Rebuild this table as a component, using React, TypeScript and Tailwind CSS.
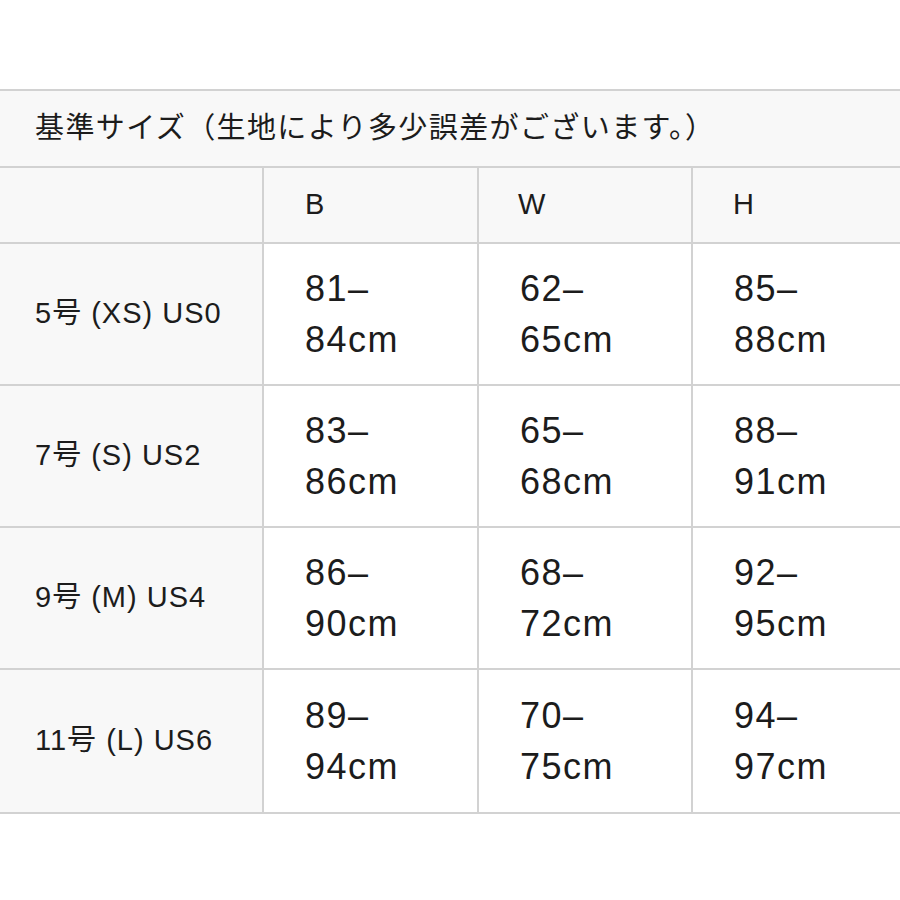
const font = { fontFamily: '"Liberation Sans", "Noto Sans CJK JP", sans-serif' };

const rows: [string, string[], string[], string[]][] = [
  ['5号 (XS) US0', ['81–', '84cm'], ['62–', '65cm'], ['85–', '88cm']],
  ['7号 (S) US2', ['83–', '86cm'], ['65–', '68cm'], ['88–', '91cm']],
  ['9号 (M) US4', ['86–', '90cm'], ['68–', '72cm'], ['92–', '95cm']],
  ['11号 (L) US6', ['89–', '94cm'], ['70–', '75cm'], ['94–', '97cm']],
];

function Range({ lines, last }: { lines: string[]; last?: boolean }) {
  return (
    <div
      className={`flex flex-col justify-center bg-white pl-[41px] text-[36px] leading-[51px] tracking-[1.5px] text-[#1c1c1c] ${
        last ? '' : 'border-r-2 border-[#d2d2d2]'
      }`}
    >
      <span>{lines[0]}</span>
      <span>{lines[1]}</span>
    </div>
  );
}

export default function App() {
  return (
    <div className="min-h-[900px] w-[900px] bg-white pt-[89px]" style={font}>
      <div className="border-y-2 border-[#d2d2d2]">
        <div className="flex h-[77px] items-center border-b-2 border-[#d2d2d2] bg-[#f8f8f8] pl-[35px] text-[29px] tracking-[1.4px] text-[#1c1c1c]">
          基準サイズ（生地により多少誤差がございます。）
        </div>
        <div className="grid h-[76px] grid-cols-[264px_215px_214px_1fr] border-b-2 border-[#d2d2d2] bg-[#f8f8f8] text-[29px] text-[#1c1c1c]">
          <div className="border-r-2 border-[#d2d2d2]" />
          <div className="flex items-center border-r-2 border-[#d2d2d2] pl-[41px]">B</div>
          <div className="flex items-center border-r-2 border-[#d2d2d2] pl-[39px]">W</div>
          <div className="flex items-center pl-[40px]">H</div>
        </div>
        {rows.map(([label, b, w, h], i) => (
          <div
            key={label}
            className={`grid h-[142px] grid-cols-[264px_215px_214px_1fr] ${
              i < rows.length - 1 ? 'border-b-2 border-[#d2d2d2]' : ''
            }`}
          >
            <div className="flex items-center border-r-2 border-[#d2d2d2] bg-[#f8f8f8] pl-[35px] text-[29px] tracking-[1px] text-[#1c1c1c]">
              {label}
            </div>
            <Range lines={b} />
            <Range lines={w} />
            <Range lines={h} last />
          </div>
        ))}
      </div>
    </div>
  );
}
